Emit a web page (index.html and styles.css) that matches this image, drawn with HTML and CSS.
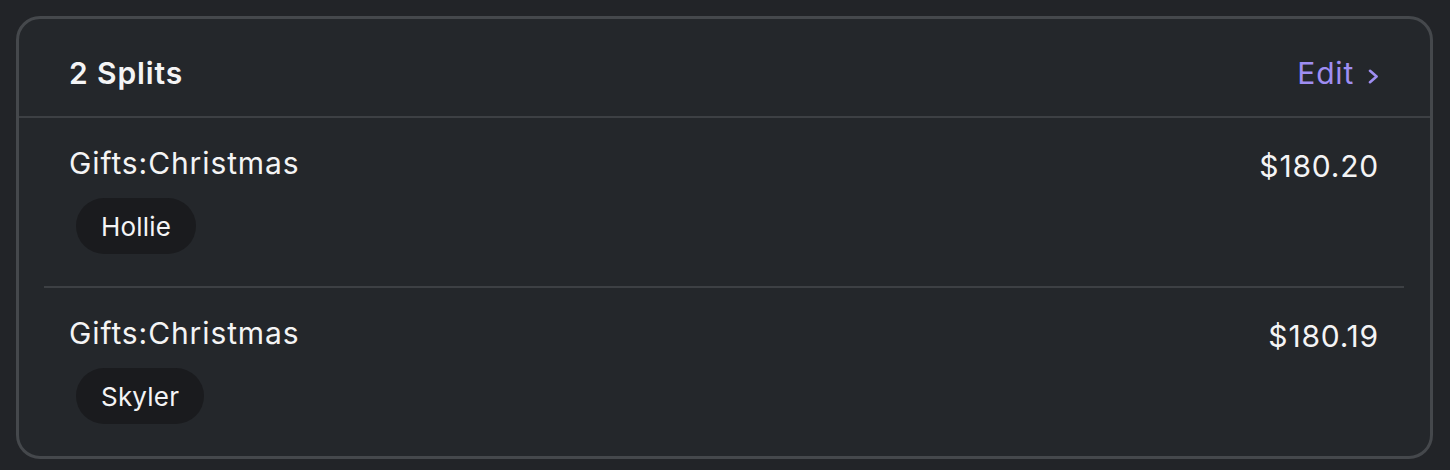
FILE: index.html
```html
<!DOCTYPE html>
<html>
<head>
<meta charset="utf-8">
<link rel="stylesheet" href="styles.css">
</head>
<body>
<div class="card">
  <div class="card-header">
    <div class="title">2 Splits</div>
    <a class="edit" href="#">Edit <svg class="chev" width="11" height="15" viewBox="0 0 11 15"><path d="M2 1.8 L8.6 7.5 L2 13.2" fill="none" stroke="currentColor" stroke-width="2.6" stroke-linecap="round" stroke-linejoin="round"/></svg></a>
  </div>
  <div class="rows">
    <div class="row">
      <div class="row-main">
        <div class="category">Gifts:Christmas</div>
        <div class="tags"><span class="tag">Hollie</span></div>
      </div>
      <div class="amount">$180.20</div>
    </div>
    <div class="row">
      <div class="row-main">
        <div class="category">Gifts:Christmas</div>
        <div class="tags"><span class="tag">Skyler</span></div>
      </div>
      <div class="amount">$180.19</div>
    </div>
  </div>
</div>
</body>
</html>
```

FILE: styles.css
```css
html, body {
  margin: 0;
  padding: 0;
  background: #222428;
}
body {
  padding: 16px 17px 0 16px;
  font-family: Inter, "Noto Sans", sans-serif;
  color: #f4f4f5;
}
.card {
  background: #24272b;
  border: 3px solid #45484c;
  border-radius: 24px;
}
.card-header {
  display: flex;
  justify-content: space-between;
  align-items: center;
  height: 87px;
  padding: 10px 51px 0 50px;
  border-bottom: 2px solid #3d4044;
}
.title {
  font-size: 30px;
  font-weight: 600;
  letter-spacing: 0.9px;
}
.edit {
  color: #9f8ef2;
  font-size: 30px;
  letter-spacing: 0.8px;
  text-decoration: none;
  display: flex;
  align-items: center;
  gap: 14px;
}
.chev {
  display: block;
  margin-top: 8px;
}
.rows {
  margin: 0 26px 0 25px;
}
.row {
  display: flex;
  justify-content: space-between;
  align-items: flex-start;
  padding: 26px 25px 32px 25px;
}
.row + .row {
  border-top: 2px solid #3d4044;
}
.category {
  font-size: 30px;
  line-height: 39px;
  letter-spacing: 0.9px;
}
.tags {
  margin-top: 15px;
  padding-left: 7px;
}
.tag {
  display: inline-flex;
  align-items: center;
  height: 56px;
  padding: 0 25px;
  border-radius: 28px;
  background: #1a1b1e;
  font-size: 26px;
  letter-spacing: 0.2px;
}
.amount {
  font-size: 30px;
  line-height: 39px;
  letter-spacing: 0.8px;
  margin-top: 3px;
}
```
